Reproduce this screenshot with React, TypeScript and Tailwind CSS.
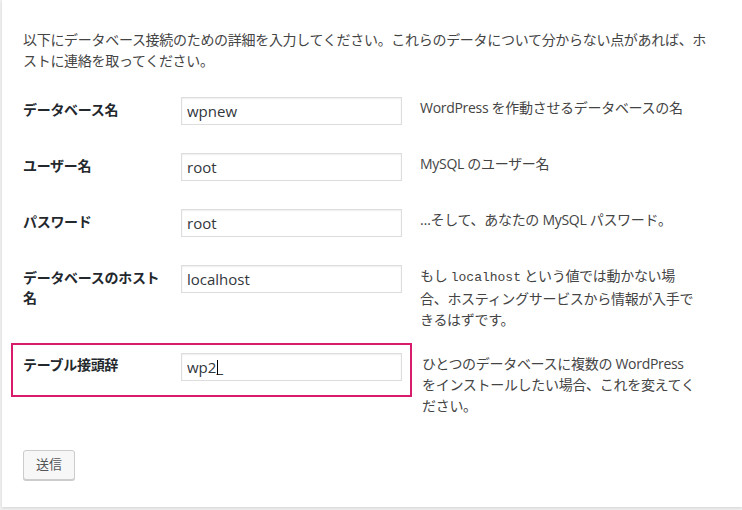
const FONT = "font-['Open_Sans','Noto_Sans_CJK_JP',sans-serif]";

type Row = {
  label: string;
  value: string;
  desc: React.ReactNode;
};

const rows: Row[] = [
  {
    label: "データベース名",
    value: "wpnew",
    desc: "WordPress を作動させるデータベースの名",
  },
  { label: "ユーザー名", value: "root", desc: "MySQL のユーザー名" },
  {
    label: "パスワード",
    value: "root",
    desc: "…そして、あなたの MySQL パスワード。",
  },
  {
    label: "データベースのホスト名",
    value: "localhost",
    desc: (
      <>
        もし{" "}
        <code className="font-['Liberation_Mono','DejaVu_Sans_Mono',monospace] text-[13px] tracking-normal">
          localhost
        </code>{" "}
        という値では動かない場合、ホスティングサービスから情報が入手できるはずです。
      </>
    ),
  },
];

function Field({ value, caret }: { value: string; caret?: boolean }) {
  return (
    <div className="relative w-[221px] shrink-0">
      <input
        readOnly
        value={value}
        className="block h-[28px] w-full border border-[#dddddd] bg-white px-[5px] text-[15px] tracking-normal text-[#32373c] shadow-[inset_0_1px_2px_rgba(0,0,0,0.07)] outline-none"
      />
      {caret && (
        <span className="absolute left-[36px] top-[7px] h-[15px] w-px bg-black" />
      )}
    </div>
  );
}

export default function App() {
  return (
    <div className={`h-[510px] w-[742px] overflow-hidden bg-[#f1f1f1] ${FONT}`}>
      <div className="ml-[2px] h-[507px] bg-white pl-[21px] pt-[29px] text-[14px] tracking-[-0.3px] text-[#444444] shadow-[0_1px_3px_rgba(0,0,0,0.13)]">
        <p className="w-[695px] leading-[21px]">
          以下にデータベース接続のための詳細を入力してください。これらのデータについて分からない点があれば、ホストに連絡を取ってください。
        </p>

        <div className="mt-[26px] flex flex-col">
          {rows.map((row, i) => (
            <div
              key={row.label}
              className={`flex items-start ${i === 3 ? "mb-[23px]" : "mb-[28px]"}`}
            >
              <div className="mr-[13px] w-[145px] shrink-0 pt-[3px] font-bold leading-[20px] text-[#23282d]">
                {row.label}
              </div>
              <Field value={row.value} />
              <div className="ml-[18px] w-[277px] leading-[21px]">{row.desc}</div>
            </div>
          ))}

          <div className="flex items-start">
            <div className="-mb-[16px] -ml-[12px] -mt-[10px] flex items-start border-2 border-[#d81b6a] pb-[14px] pl-[10px] pr-[8px] pt-[8px]">
              <div className="mr-[13px] w-[145px] shrink-0 pt-[2px] font-bold leading-[20px] text-[#23282d]">
                テーブル接頭辞
              </div>
              <Field value="wp2_" caret />
            </div>
            <div className="ml-[10px] w-[277px] leading-[21px]">
              ひとつのデータベースに複数の WordPress をインストールしたい場合、これを変えてください。
            </div>
          </div>
        </div>

        <button className="mt-[34px] h-[30px] rounded-[3px] border border-[#cccccc] bg-[#f7f7f7] px-[12px] pb-[2px] text-[13px] leading-[26px] tracking-normal text-[#555555] shadow-[0_1px_0_#cccccc]">
          送信
        </button>
      </div>
    </div>
  );
}
